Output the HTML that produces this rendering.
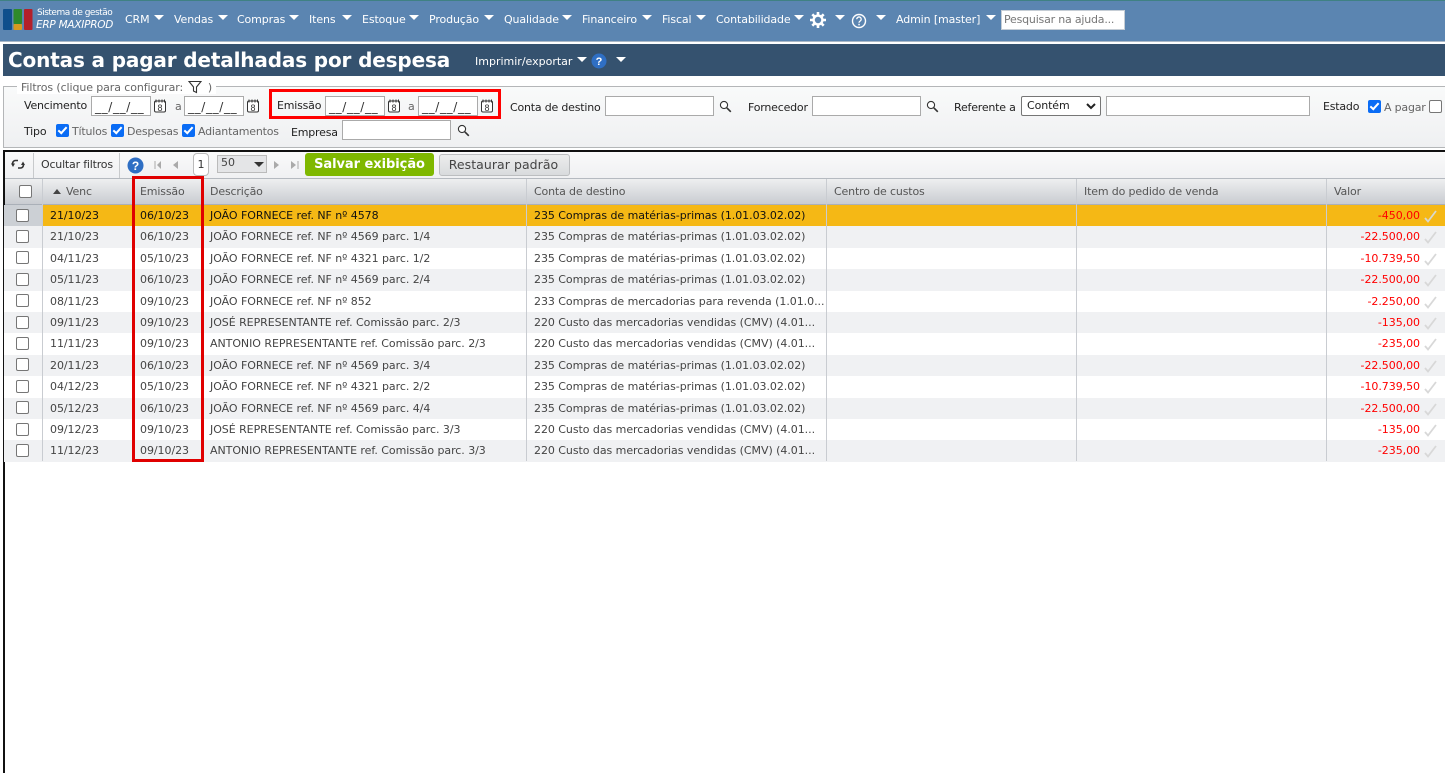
<!DOCTYPE html>
<html lang="pt-BR"><head><meta charset="utf-8"><title>Contas a pagar detalhadas por despesa</title>
<style>
html,body{margin:0;padding:0;background:#fff}
body{position:relative;width:1445px;height:773px;overflow:hidden;font-family:"DejaVu Sans","Liberation Sans",sans-serif;font-size:11px;color:#222}
.a{position:absolute;white-space:nowrap}
.t{position:absolute;white-space:nowrap;line-height:14px;letter-spacing:-.2px}
.n{position:absolute;top:13px;color:#fff;white-space:nowrap;line-height:14px;letter-spacing:-.12px}
.c{position:absolute;width:0;height:0;border-left:5px solid transparent;border-right:5px solid transparent;border-top:5px solid #fff}
.i{position:absolute;box-sizing:border-box;background:#fff;border:1px solid #aaa;height:20px}
.d{position:absolute;box-sizing:border-box;background:#fff;border:1px solid #aaa;height:20px;width:60px;font-size:12px;line-height:20px;padding-left:3px;letter-spacing:.65px;color:#333}
.g{color:#666}
.k{position:absolute;box-sizing:border-box;width:13px;height:13px;border-radius:2px;background:#0a6cf5}
.k:after{content:"";position:absolute;left:4px;top:1px;width:3px;height:7px;border:solid #fff;border-width:0 2px 2px 0;transform:rotate(42deg)}
.u{position:absolute;box-sizing:border-box;width:13px;height:13px;border-radius:2px;background:#fff;border:1px solid #767676}
.h{position:absolute;top:179px;height:25px;line-height:25px;color:#555;white-space:nowrap;letter-spacing:-.15px}
.r{position:absolute;left:4px;right:0;height:21.4px;line-height:21px;color:#444;letter-spacing:-.05px;white-space:nowrap}
.r span{position:absolute;top:0}
.r .v{right:25px;color:#f00}
.r .x{position:absolute;left:12px;top:3.5px;width:13px;height:13px;box-sizing:border-box;border:1px solid #767676;border-radius:2px;background:#fff}
.r svg{position:absolute;left:1419px;top:4px}
.e{background:#f0f1f3}
.o{background:#fff}
.s{background:#f5b815;color:#111}
.vl{position:absolute;top:179px;width:1px;background:#c9ccd1;height:282px}
svg{display:block}
</style></head><body>

<!-- top nav -->
<div class="a" style="left:0;top:0;width:1445px;height:41px;background:#5b85b1;border-top:1px solid #3f8183;box-sizing:border-box"></div>
<div class="a" style="left:0;top:41px;width:1445px;height:1px;background:#aab9c8"></div>
<svg class="a" style="left:3px;top:9px" width="30" height="22"><rect x="0" y="0" width="9" height="21" rx="1" fill="#0f4f8c"/><rect x="10.500" y="0" width="8.500" height="15" rx="1" fill="#2f8a2a"/><rect x="10.500" y="15" width="8.500" height="6" rx="1" fill="#d69a1f"/><rect x="21" y="0" width="8.500" height="21" rx="1" fill="#b3202a"/></svg>
<div class="a" style="left:37px;top:8px;font-size:9px;color:#fff;letter-spacing:-.5px;line-height:11px;font-weight:500">Sistema de gestão</div>
<div class="a" style="left:36px;top:19px;font-size:10.500px;color:#fff;font-style:italic;letter-spacing:-.25px;line-height:12px">ERP MAXIPROD</div>
<div class="n" style="left:125px">CRM</div><div class="c" style="left:154px;top:15px"></div>
<div class="n" style="left:174px">Vendas</div><div class="c" style="left:218px;top:15px"></div>
<div class="n" style="left:237px">Compras</div><div class="c" style="left:289px;top:15px"></div>
<div class="n" style="left:309px">Itens</div><div class="c" style="left:342px;top:15px"></div>
<div class="n" style="left:362px">Estoque</div><div class="c" style="left:409px;top:15px"></div>
<div class="n" style="left:429px">Produção</div><div class="c" style="left:484px;top:15px"></div>
<div class="n" style="left:504px">Qualidade</div><div class="c" style="left:562px;top:15px"></div>
<div class="n" style="left:582px">Financeiro</div><div class="c" style="left:642px;top:15px"></div>
<div class="n" style="left:662px">Fiscal</div><div class="c" style="left:696px;top:15px"></div>
<div class="n" style="left:716px">Contabilidade</div><div class="c" style="left:794px;top:15px"></div>
<svg class="a" style="left:810px;top:12px" width="16" height="16" viewBox="0 0 16 16"><circle cx="8" cy="8" r="4.400" fill="none" stroke="#fff" stroke-width="2.400"/><g stroke="#fff" stroke-width="2.600"><path d="M8 0v3M8 13v3M0 8h3M13 8h3M2.300 2.300l2.200 2.200M11.500 11.500l2.200 2.200M2.300 13.700l2.200-2.200M11.500 4.500l2.200-2.200"/></g></svg>
<div class="c" style="left:835px;top:15px"></div>
<svg class="a" style="left:851px;top:13px" width="16" height="16" viewBox="0 0 16 16"><circle cx="8" cy="8" r="6.500" fill="none" stroke="#fff" stroke-width="1.400"/><path d="M5.800 6.200a2.200 2.200 0 1 1 3.400 1.800c-.8.500-1.200.900-1.200 1.800" fill="none" stroke="#fff" stroke-width="1.300"/><rect x="7.300" y="10.800" width="1.500" height="1.500" fill="#fff"/></svg>
<div class="c" style="left:876px;top:15px"></div>
<div class="n" style="left:896px">Admin [master]</div><div class="c" style="left:986px;top:15px"></div>
<div class="a" style="left:1001px;top:10px;width:124px;height:20px;box-sizing:border-box;background:#fff;border:1px solid #c5cdd5;line-height:18px;padding-left:2px;color:#777;letter-spacing:-.2px">Pesquisar na ajuda...</div>

<!-- title bar -->
<div class="a" style="left:3px;top:44px;width:1442px;height:32px;background:#35526f"></div>
<div class="a" style="left:8px;top:48px;font-size:20px;font-weight:bold;color:#fff;line-height:25px;letter-spacing:-.15px;font-family:'DejaVu Sans',sans-serif">Contas a pagar detalhadas por despesa</div>
<div class="t" style="left:475px;top:55px;color:#fff;letter-spacing:0">Imprimir/exportar</div><div class="c" style="left:577px;top:57px"></div>
<svg class="a" style="left:591px;top:53px" width="16" height="16" viewBox="0 0 16 16"><circle cx="8" cy="8" r="7.500" fill="#2f6fc4"/><text x="8" y="12" font-size="11" font-weight="bold" fill="#fff" text-anchor="middle" font-family="Liberation Sans">?</text></svg>
<div class="c" style="left:616px;top:57px"></div>

<!-- filters -->
<div class="a" style="left:3px;top:86px;width:1442px;height:62px;box-sizing:border-box;border:1px solid #b4b6b8;border-right:0;background:linear-gradient(#f9fafa,#eff0f2)"></div>
<div class="a" style="left:17px;top:80px;height:14px;padding:0 4px;background:#fff;line-height:15px;color:#666;letter-spacing:-.1px">Filtros (clique para configurar: <span style="display:inline-block;width:18px"></span> )</div>
<svg class="a" style="left:188px;top:80px" width="14" height="14" viewBox="0 0 14 14"><path d="M1 1.500h12L8.500 7v5.500l-3-1.500V7z" fill="none" stroke="#333" stroke-width="1.100"/></svg>

<div class="t" style="left:24px;top:99px">Vencimento</div>
<div class="d" style="left:91px;top:96px">__/__/__</div>
<svg class="a" style="left:153px;top:99px" width="14" height="14" viewBox="0 0 14 14"><rect x="1.500" y="2" width="11" height="11" rx="1.500" fill="#fff" stroke="#333"/><path d="M3 .5v3M6 .5v3M9 .5v3M11.500 .5v3" stroke="#333"/><text x="7" y="12" font-size="9" text-anchor="middle" fill="#333" font-family="Liberation Sans">8</text></svg>
<div class="t g" style="left:175px;top:100px">a</div>
<div class="d" style="left:184px;top:96px">__/__/__</div>
<svg class="a" style="left:246px;top:99px" width="14" height="14" viewBox="0 0 14 14"><rect x="1.500" y="2" width="11" height="11" rx="1.500" fill="#fff" stroke="#333"/><path d="M3 .5v3M6 .5v3M9 .5v3M11.500 .5v3" stroke="#333"/><text x="7" y="12" font-size="9" text-anchor="middle" fill="#333" font-family="Liberation Sans">8</text></svg>

<div class="t" style="left:277px;top:99px">Emissão</div>
<div class="d" style="left:325px;top:96px">__/__/__</div>
<svg class="a" style="left:387px;top:99px" width="14" height="14" viewBox="0 0 14 14"><rect x="1.500" y="2" width="11" height="11" rx="1.500" fill="#fff" stroke="#333"/><path d="M3 .5v3M6 .5v3M9 .5v3M11.500 .5v3" stroke="#333"/><text x="7" y="12" font-size="9" text-anchor="middle" fill="#333" font-family="Liberation Sans">8</text></svg>
<div class="t g" style="left:408px;top:100px">a</div>
<div class="d" style="left:418px;top:96px">__/__/__</div>
<svg class="a" style="left:480px;top:99px" width="14" height="14" viewBox="0 0 14 14"><rect x="1.500" y="2" width="11" height="11" rx="1.500" fill="#fff" stroke="#333"/><path d="M3 .5v3M6 .5v3M9 .5v3M11.500 .5v3" stroke="#333"/><text x="7" y="12" font-size="9" text-anchor="middle" fill="#333" font-family="Liberation Sans">8</text></svg>
<div class="a" style="left:269px;top:89px;width:232px;height:30px;box-sizing:border-box;border:3px solid #f00"></div>

<div class="t" style="left:510px;top:101px">Conta de destino</div>
<div class="i" style="left:605px;top:96px;width:109px"></div>
<svg class="a" style="left:719px;top:100px" width="13" height="13" viewBox="0 0 13 13"><circle cx="5" cy="5" r="3.600" fill="#fff" stroke="#333" stroke-width="1.100"/><path d="M7.800 7.800l4 4" stroke="#333" stroke-width="1.600"/></svg>
<div class="t" style="left:748px;top:101px">Fornecedor</div>
<div class="i" style="left:812px;top:96px;width:109px"></div>
<svg class="a" style="left:926px;top:100px" width="13" height="13" viewBox="0 0 13 13"><circle cx="5" cy="5" r="3.600" fill="#fff" stroke="#333" stroke-width="1.100"/><path d="M7.800 7.800l4 4" stroke="#333" stroke-width="1.600"/></svg>
<div class="t" style="left:954px;top:101px">Referente a</div>
<div class="a" style="left:1021px;top:96px;width:80px;height:20px;box-sizing:border-box;background:#fff;border:1px solid #767676;border-radius:2px;line-height:17px;padding-left:5px;letter-spacing:-.1px">Contém</div>
<svg class="a" style="left:1086px;top:103px" width="10" height="7" viewBox="0 0 10 7"><path d="M1 1l4 4 4-4" fill="none" stroke="#222" stroke-width="2"/></svg>
<div class="i" style="left:1106px;top:96px;width:204px"></div>
<div class="t" style="left:1323px;top:100px">Estado</div>
<div class="k" style="left:1368px;top:100px"></div>
<div class="t g" style="left:1384px;top:101px">A pagar</div>
<div class="u" style="left:1429px;top:100px"></div>

<div class="t" style="left:24px;top:125px">Tipo</div>
<div class="k" style="left:56px;top:124px"></div><div class="t g" style="left:72px;top:125px">Títulos</div>
<div class="k" style="left:111px;top:124px"></div><div class="t g" style="left:127px;top:125px">Despesas</div>
<div class="k" style="left:182px;top:124px"></div><div class="t g" style="left:198px;top:125px">Adiantamentos</div>
<div class="t" style="left:291px;top:126px">Empresa</div>
<div class="i" style="left:342px;top:120px;width:109px"></div>
<svg class="a" style="left:457px;top:124px" width="13" height="13" viewBox="0 0 13 13"><circle cx="5" cy="5" r="3.600" fill="#fff" stroke="#333" stroke-width="1.100"/><path d="M7.800 7.800l4 4" stroke="#333" stroke-width="1.600"/></svg>

<!-- black frame -->
<div class="a" style="left:3px;top:150px;width:1442px;height:2px;background:#111"></div>
<div class="a" style="left:3px;top:150px;width:2px;height:623px;background:#111"></div>

<!-- toolbar -->
<div class="a" style="left:5px;top:152px;width:1440px;height:27px;background:linear-gradient(#fafafa,#eff0f2)"></div>
<svg class="a" style="left:11px;top:158px" width="14" height="13" viewBox="0 0 14 13"><path d="M7 2.500H4.500A3 3 0 0 0 2 7" fill="none" stroke="#333" stroke-width="1.600"/><path d="M0 5.500h4L2 9z" fill="#333"/><path d="M7 10h2.500A3 3 0 0 0 12 5.500" fill="none" stroke="#333" stroke-width="1.600"/><path d="M10 7h4l-2-3.500z" fill="#333"/></svg>
<div class="a" style="left:33px;top:153px;width:1px;height:25px;background:#c8cacc"></div>
<div class="t" style="left:41px;top:158px;color:#333">Ocultar filtros</div>
<div class="a" style="left:119px;top:153px;width:1px;height:25px;background:#c8cacc"></div>
<svg class="a" style="left:127px;top:157px" width="17" height="17" viewBox="0 0 17 17"><circle cx="8.500" cy="8.500" r="8" fill="#2f6fc4"/><text x="8.500" y="13" font-size="12" font-weight="bold" fill="#fff" text-anchor="middle" font-family="Liberation Sans">?</text></svg>
<svg class="a" style="left:154px;top:160px" width="26" height="10" viewBox="0 0 26 10"><path d="M1 1v8" stroke="#aaa"/><path d="M7 1v8L3 5zM24 1v8l-5-4z" fill="#aaa"/></svg>
<div class="a" style="left:193px;top:153px;width:16px;height:23px;box-sizing:border-box;background:#fff;border:1px solid #bbb;border-radius:4px;text-align:center;line-height:21px;color:#333">1</div>
<div class="a" style="left:217px;top:155px;width:50px;height:18px;box-sizing:border-box;background:#e4e5e7;border:1px solid #bbb;line-height:14px;padding-left:3px;color:#444">50</div>
<svg class="a" style="left:254px;top:162px" width="10" height="6"><path d="M0 0h10L5 5z" fill="#333"/></svg>
<svg class="a" style="left:272px;top:160px" width="28" height="10" viewBox="0 0 28 10"><path d="M2 1v8l5-4zM19 1v8l5-4z" fill="#aaa"/><path d="M26 1v8" stroke="#aaa"/></svg>
<div class="a" style="left:305px;top:153px;width:129px;height:23px;background:#7fb800;border-radius:3px;color:#fff;font-weight:bold;font-size:13px;text-align:center;line-height:24px;letter-spacing:-.05px">Salvar exibição</div>
<div class="a" style="left:439px;top:154px;width:131px;height:22px;box-sizing:border-box;background:linear-gradient(#eceded,#d9dbdd);border:1px solid #bcbec0;border-radius:3px;color:#444;text-align:center;line-height:20px;font-size:12.500px;letter-spacing:.05px;padding-right:2px">Restaurar padrão</div>

<!-- header -->
<div class="a" style="left:5px;top:178px;width:1440px;height:1px;background:#b5bac0"></div>
<div class="a" style="left:5px;top:179px;width:1440px;height:25px;background:linear-gradient(#eeeff0,#c9ccd1)"></div>
<div class="a" style="left:5px;top:204px;width:1440px;height:1px;background:#aab0b8"></div>
<div class="u" style="left:19px;top:185px"></div>
<svg class="a" style="left:53px;top:189px" width="8" height="5"><path d="M0 5h8L4 0z" fill="#444"/></svg>
<div class="h" style="left:66px">Venc</div>
<div class="h" style="left:140px">Emissão</div>
<div class="h" style="left:210px">Descrição</div>
<div class="h" style="left:534px">Conta de destino</div>
<div class="h" style="left:834px">Centro de custos</div>
<div class="h" style="left:1084px">Item do pedido de venda</div>
<div class="h" style="left:1334px">Valor</div>

<!-- rows -->
<div class="r s" style="top:205px"><div class="a" style="left:0;top:0;width:39px;height:21.400px;background:#ccd0d5"></div><i class="x"></i><span style="left:46px">21/10/23</span><span style="left:136px">06/10/23</span><span style="left:206px">JOÃO FORNECE ref. NF nº 4578</span><span style="left:530px">235 Compras de matérias-primas (1.01.03.02.02)</span><span class="v">-450,00</span><svg width="14" height="14" viewBox="0 0 14 14"><path d="M2 9l3 3.500L13 2" fill="none" stroke="#d8d8d0" stroke-width="1.800"/></svg></div>
<div class="r e" style="top:226.400px"><i class="x"></i><span style="left:46px">21/10/23</span><span style="left:136px">06/10/23</span><span style="left:206px">JOÃO FORNECE ref. NF nº 4569 parc. 1/4</span><span style="left:530px">235 Compras de matérias-primas (1.01.03.02.02)</span><span class="v">-22.500,00</span><svg width="14" height="14" viewBox="0 0 14 14"><path d="M2 9l3 3.500L13 2" fill="none" stroke="#d8d8d8" stroke-width="1.800"/></svg></div>
<div class="r o" style="top:247.800px"><i class="x"></i><span style="left:46px">04/11/23</span><span style="left:136px">05/10/23</span><span style="left:206px">JOÃO FORNECE ref. NF nº 4321 parc. 1/2</span><span style="left:530px">235 Compras de matérias-primas (1.01.03.02.02)</span><span class="v">-10.739,50</span><svg width="14" height="14" viewBox="0 0 14 14"><path d="M2 9l3 3.500L13 2" fill="none" stroke="#d8d8d8" stroke-width="1.800"/></svg></div>
<div class="r e" style="top:269.200px"><i class="x"></i><span style="left:46px">05/11/23</span><span style="left:136px">06/10/23</span><span style="left:206px">JOÃO FORNECE ref. NF nº 4569 parc. 2/4</span><span style="left:530px">235 Compras de matérias-primas (1.01.03.02.02)</span><span class="v">-22.500,00</span><svg width="14" height="14" viewBox="0 0 14 14"><path d="M2 9l3 3.500L13 2" fill="none" stroke="#d8d8d8" stroke-width="1.800"/></svg></div>
<div class="r o" style="top:290.600px"><i class="x"></i><span style="left:46px">08/11/23</span><span style="left:136px">09/10/23</span><span style="left:206px">JOÃO FORNECE ref. NF nº 852</span><span style="left:530px">233 Compras de mercadorias para revenda (1.01.0...</span><span class="v">-2.250,00</span><svg width="14" height="14" viewBox="0 0 14 14"><path d="M2 9l3 3.500L13 2" fill="none" stroke="#d8d8d8" stroke-width="1.800"/></svg></div>
<div class="r e" style="top:312px"><i class="x"></i><span style="left:46px">09/11/23</span><span style="left:136px">09/10/23</span><span style="left:206px">JOSÉ REPRESENTANTE ref. Comissão parc. 2/3</span><span style="left:530px">220 Custo das mercadorias vendidas (CMV) (4.01...</span><span class="v">-135,00</span><svg width="14" height="14" viewBox="0 0 14 14"><path d="M2 9l3 3.500L13 2" fill="none" stroke="#d8d8d8" stroke-width="1.800"/></svg></div>
<div class="r o" style="top:333.400px"><i class="x"></i><span style="left:46px">11/11/23</span><span style="left:136px">09/10/23</span><span style="left:206px">ANTONIO REPRESENTANTE ref. Comissão parc. 2/3</span><span style="left:530px">220 Custo das mercadorias vendidas (CMV) (4.01...</span><span class="v">-235,00</span><svg width="14" height="14" viewBox="0 0 14 14"><path d="M2 9l3 3.500L13 2" fill="none" stroke="#d8d8d8" stroke-width="1.800"/></svg></div>
<div class="r e" style="top:354.800px"><i class="x"></i><span style="left:46px">20/11/23</span><span style="left:136px">06/10/23</span><span style="left:206px">JOÃO FORNECE ref. NF nº 4569 parc. 3/4</span><span style="left:530px">235 Compras de matérias-primas (1.01.03.02.02)</span><span class="v">-22.500,00</span><svg width="14" height="14" viewBox="0 0 14 14"><path d="M2 9l3 3.500L13 2" fill="none" stroke="#d8d8d8" stroke-width="1.800"/></svg></div>
<div class="r o" style="top:376.200px"><i class="x"></i><span style="left:46px">04/12/23</span><span style="left:136px">05/10/23</span><span style="left:206px">JOÃO FORNECE ref. NF nº 4321 parc. 2/2</span><span style="left:530px">235 Compras de matérias-primas (1.01.03.02.02)</span><span class="v">-10.739,50</span><svg width="14" height="14" viewBox="0 0 14 14"><path d="M2 9l3 3.500L13 2" fill="none" stroke="#d8d8d8" stroke-width="1.800"/></svg></div>
<div class="r e" style="top:397.600px"><i class="x"></i><span style="left:46px">05/12/23</span><span style="left:136px">06/10/23</span><span style="left:206px">JOÃO FORNECE ref. NF nº 4569 parc. 4/4</span><span style="left:530px">235 Compras de matérias-primas (1.01.03.02.02)</span><span class="v">-22.500,00</span><svg width="14" height="14" viewBox="0 0 14 14"><path d="M2 9l3 3.500L13 2" fill="none" stroke="#d8d8d8" stroke-width="1.800"/></svg></div>
<div class="r o" style="top:419px"><i class="x"></i><span style="left:46px">09/12/23</span><span style="left:136px">09/10/23</span><span style="left:206px">JOSÉ REPRESENTANTE ref. Comissão parc. 3/3</span><span style="left:530px">220 Custo das mercadorias vendidas (CMV) (4.01...</span><span class="v">-135,00</span><svg width="14" height="14" viewBox="0 0 14 14"><path d="M2 9l3 3.500L13 2" fill="none" stroke="#d8d8d8" stroke-width="1.800"/></svg></div>
<div class="r e" style="top:440.400px"><i class="x"></i><span style="left:46px">11/12/23</span><span style="left:136px">09/10/23</span><span style="left:206px">ANTONIO REPRESENTANTE ref. Comissão parc. 3/3</span><span style="left:530px">220 Custo das mercadorias vendidas (CMV) (4.01...</span><span class="v">-235,00</span><svg width="14" height="14" viewBox="0 0 14 14"><path d="M2 9l3 3.500L13 2" fill="none" stroke="#d8d8d8" stroke-width="1.800"/></svg></div>

<!-- column lines -->
<div class="vl" style="left:42px"></div><div class="vl" style="left:526px"></div><div class="vl" style="left:826px"></div><div class="vl" style="left:1076px"></div><div class="vl" style="left:1326px"></div>

<!-- red column box -->
<div class="a" style="left:132px;top:176px;width:72px;height:286px;box-sizing:border-box;border:3px solid #e00000"></div>
</body></html>
